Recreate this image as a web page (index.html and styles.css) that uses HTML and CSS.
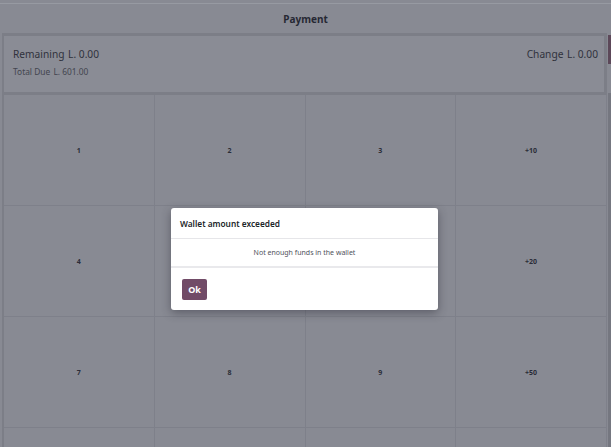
FILE: index.html
```html
<!DOCTYPE html>
<html>
<head>
<meta charset="utf-8">
<link rel="stylesheet" href="styles.css">
</head>
<body>
<div class="screen">
  <div class="topline"></div>
  <div class="header">Payment</div>
  <div class="main">
    <div class="content">
      <div class="summary">
        <div class="sum-left">
          <div class="remaining">Remaining <span>L. 0.00</span></div>
          <div class="due">Total Due <span>L. 601.00</span></div>
        </div>
        <div class="change">Change <span>L. 0.00</span></div>
      </div>
      <div class="pad">
        <div class="key">1</div><div class="key">2</div><div class="key">3</div><div class="key">+10</div>
        <div class="key">4</div><div class="key">5</div><div class="key">6</div><div class="key">+20</div>
        <div class="key">7</div><div class="key">8</div><div class="key">9</div><div class="key">+50</div>
        <div class="key"></div><div class="key"></div><div class="key"></div><div class="key"></div>
      </div>
    </div>
    <div class="scroll">
      <div class="thumb"></div>
      <div class="gap"></div>
      <div class="track"></div>
    </div>
  </div>
</div>
<div class="dialog">
  <div class="dlg-head">Wallet amount exceeded</div>
  <div class="dlg-body">Not enough funds in the wallet</div>
  <div class="dlg-foot"><button class="ok">Ok</button></div>
</div>
</body>
</html>
```
FILE: styles.css
```css
* { box-sizing: border-box; }
html, body {
  margin: 0;
  padding: 0;
  height: 100%;
  overflow: hidden;
}
body {
  background: #888a93;
  font-family: "Noto Sans", "Open Sans", sans-serif;
  color: #2b2d38;
}
.screen {
  display: flex;
  flex-direction: column;
  height: 100%;
}
.topline {
  height: 4px;
  flex-shrink: 0;
  border-bottom: 1px solid #979aa2;
}
.header {
  height: 29px;
  flex-shrink: 0;
  display: flex;
  align-items: center;
  justify-content: center;
  font-weight: 700;
  font-size: 10px;
  color: #262833;
}
.main {
  display: flex;
  flex: 1;
  min-height: 0;
}
.content {
  flex: 1;
  padding-left: 2px;
  display: flex;
  flex-direction: column;
  min-width: 0;
}
.summary {
  height: 62px;
  flex-shrink: 0;
  border: 3px solid #7c7e87;
  border-left-width: 2px;
  background: #8a8c95;
  display: flex;
  justify-content: space-between;
  padding: 11px 6px 0 9px;
}
.remaining, .change {
  font-size: 10.2px;
  color: #30323c;
}
.remaining span, .change span { margin-left: 1px; }
.due {
  margin-top: 5px;
  font-size: 8.4px;
  color: #43454f;
}
.due span { margin-left: 1px; }
.pad {
  flex-shrink: 0;
  display: grid;
  grid-template-columns: repeat(4, 1fr);
  grid-auto-rows: 111px;
  border-left: 2px solid #7c7e87;
}
.key {
  display: flex;
  align-items: center;
  justify-content: center;
  font-size: 7px;
  font-weight: 700;
  color: #2b2d38;
  border-right: 1px solid #7e808a;
  border-bottom: 1px solid #7e808a;
}
.scroll {
  width: 4px;
  flex-shrink: 0;
  display: flex;
  flex-direction: column;
  padding-left: 1px;
}
.thumb {
  height: 29px;
  margin-top: 2px;
  background: #5c4859;
}
.gap { height: 29px; }
.track {
  flex: 1;
  background: #757780;
}
.dialog {
  position: absolute;
  left: 171px;
  top: 208px;
  width: 267px;
  background: #fff;
  border-radius: 3px;
  box-shadow: 0 3px 10px rgba(40, 40, 50, 0.45);
  color: #212529;
}
.dlg-head {
  height: 31px;
  display: flex;
  align-items: center;
  padding-left: 9px;
  font-size: 8.3px;
  font-weight: 600;
  border-bottom: 1px solid #e6e6e9;
}
.dlg-body {
  height: 29px;
  display: flex;
  align-items: center;
  justify-content: center;
  font-size: 7px;
  color: #50525b;
  border-bottom: 2px solid #e9e9ec;
}
.dlg-foot {
  height: 42px;
  display: flex;
  align-items: center;
  padding-left: 11px;
}
.ok {
  width: 25px;
  height: 21px;
  border: none;
  border-radius: 2px;
  background: #714b67;
  color: #fff;
  font-family: "Noto Sans", "Open Sans", sans-serif;
  font-weight: 700;
  font-size: 9px;
  padding: 0;
}
```
